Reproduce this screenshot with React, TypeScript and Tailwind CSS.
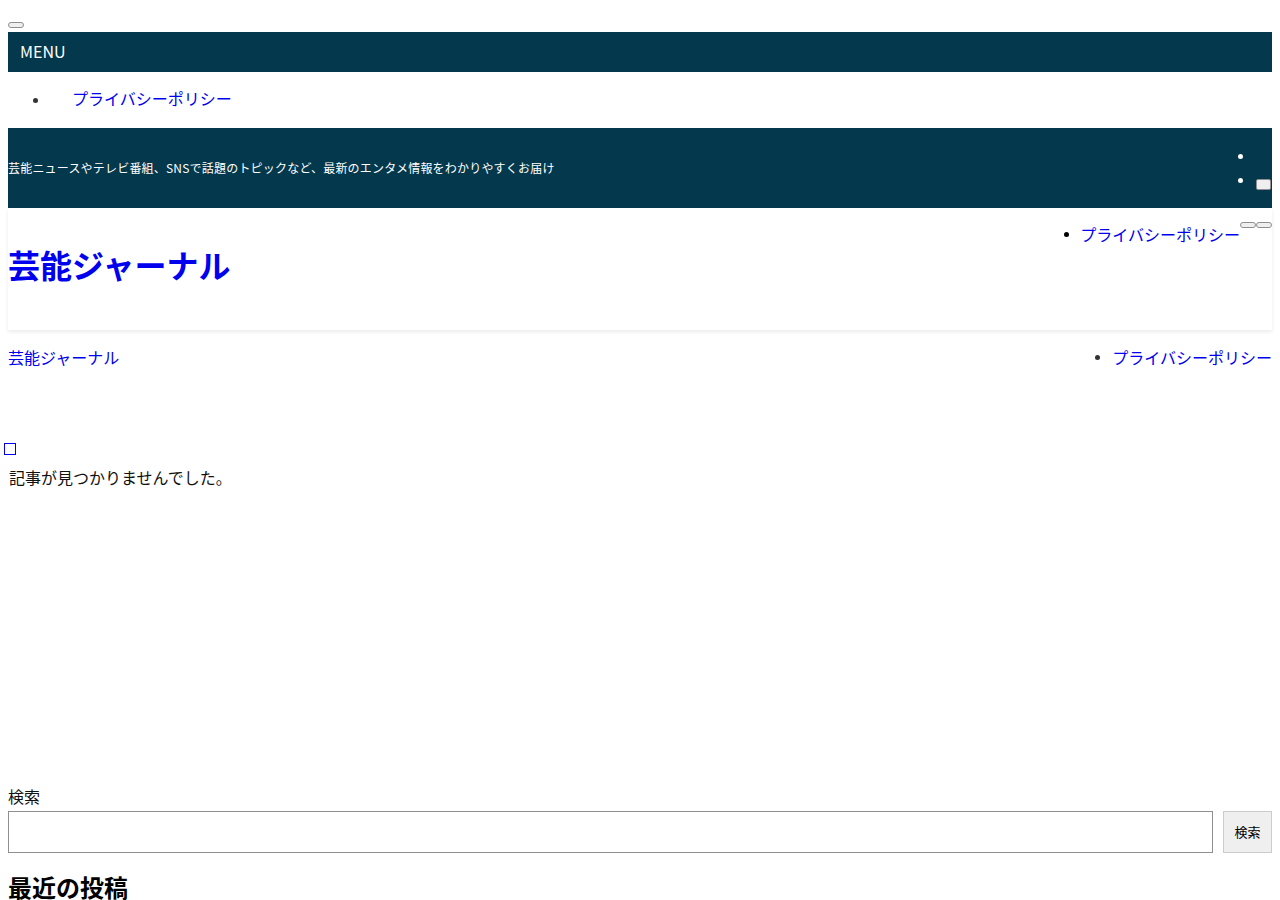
import React from 'react';

const font = "font-['Noto_Sans_CJK_JP','Noto_Sans',sans-serif]";

const Bullet: React.FC<{ className?: string }> = ({ className = 'bg-[#333]' }) => (
    <span className={`inline-block w-[5px] h-[5px] rounded-full ${className}`} />
);

const App: React.FC = () => {
    return (
        <div className={`${font} min-h-[900px] bg-white text-[#222] px-2 pt-[22px]`}>
            {/* toggle button */}
            <button className="block w-4 h-[6px] rounded-full border border-[#8f8f8f] bg-[#efefef]" />

            {/* menu bar */}
            <div className="mt-1 h-10 bg-[#04384c] px-3 pb-[2px] flex items-center text-white text-base">MENU</div>

            <ul className="pl-6 pt-[14px] pb-[18px]">
                <li className="flex items-center h-6">
                    <Bullet className="bg-[#333] ml-[1px] mt-[4px]" />
                    <a href="#" className="ml-[34px] text-[#0000ee] text-base leading-6">プライバシーポリシー</a>
                </li>
            </ul>

            {/* header band */}
            <div className="h-20 bg-[#04384c] flex items-center justify-between">
                <p className="text-white text-xs tracking-[0.2px]">
                    芸能ニュースやテレビ番組、SNSで話題のトピックなど、最新のエンタメ情報をわかりやすくお届け
                </p>
                <div className="flex items-end mr-[1px]">
                    <ul className="w-[18px]">
                        <li className="h-6 flex items-center"><Bullet className="bg-white" /></li>
                        <li className="h-6 flex items-center"><Bullet className="bg-white" /></li>
                    </ul>
                    <button className="w-[15px] h-[11px] mb-[2px] rounded-[2px] border border-[#8f8f8f] bg-[#efefef]" />
                </div>
            </div>

            {/* site header */}
            <div className="h-[122px] bg-white shadow-[0_2px_4px_rgba(0,0,0,0.08)] flex justify-between">
                <h1 className="self-center mb-[10px] text-[32px] leading-10 font-bold text-[#0000ee]">
                    <a href="#">芸能ジャーナル</a>
                </h1>
                <div className="flex items-start pt-[14px]">
                    <ul>
                        <li className="flex items-center h-6">
                            <Bullet className="bg-black mr-[11px]" />
                            <a href="#" className="text-[#0000ee] text-base leading-6">プライバシーポリシー</a>
                        </li>
                    </ul>
                    <button className="w-4 h-[6px] rounded-full border border-[#8f8f8f] bg-[#efefef]" />
                    <button className="w-4 h-[6px] rounded-full border border-[#8f8f8f] bg-[#efefef]" />
                </div>
            </div>

            {/* breadcrumb / sub nav */}
            <div className="mt-[15px] flex items-center justify-between h-6">
                <a href="#" className="text-[#0000ee] text-base leading-6">芸能ジャーナル</a>
                <ul>
                    <li className="flex items-center">
                        <Bullet className="bg-[#333] mr-[12px]" />
                        <a href="#" className="text-[#0000ee] text-base leading-6">プライバシーポリシー</a>
                    </li>
                </ul>
            </div>

            {/* main content */}
            <div className="mt-[74px] -ml-1 w-3 h-3 border border-[#0000ee]" />
            <p className="mt-[10px] ml-[1px] text-base leading-6 text-[#111]">記事が見つかりませんでした。</p>

            {/* sidebar search */}
            <label className="block mt-[295px] text-base leading-6 text-[#111]">検索</label>
            <div className="mt-[3px] flex gap-[10px]">
                <input type="text" className="flex-1 h-[42px] border border-[#8f8f8f] bg-white" />
                <button className="w-[49px] h-[42px] border border-[#cccccc] bg-[#efefef] text-[13px] text-black">検索</button>
            </div>

            <h2 className="mt-[18px] text-2xl leading-8 font-bold text-black">最近の投稿</h2>
        </div>
    );
};

export default App;
